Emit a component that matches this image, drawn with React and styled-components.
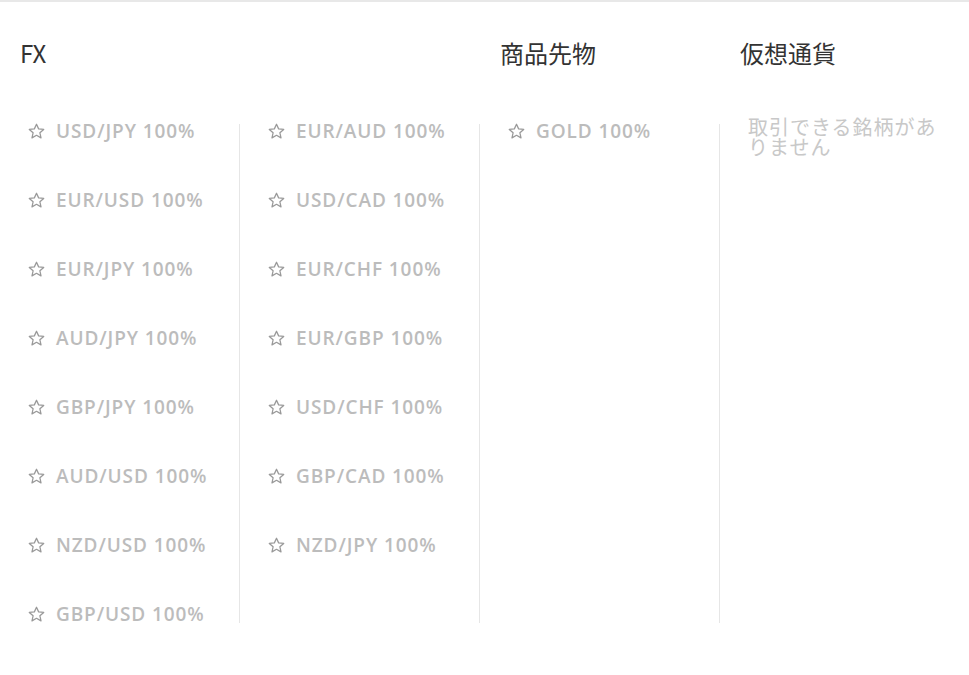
import React from "react";
import styled, { createGlobalStyle } from "styled-components";

const Global = createGlobalStyle`
  html, body { margin: 0; padding: 0; background: #fff; }
  body { font-family: "Open Sans", "Noto Sans CJK JP", sans-serif; }
`;

const Page = styled.div`
  border-top: 2px solid #e8e8e8;
  display: grid;
  grid-template-columns: 480px 240px 240px;
  width: 969px;
  height: 673px;
  box-sizing: border-box;
`;

const Section = styled.section`
  display: flex;
  flex-direction: column;
`;

const Heading = styled.h2`
  margin: 0;
  padding: 36px 0 0 20px;
  height: 82px;
  box-sizing: border-box;
  font-family: "Noto Sans CJK JP", "Open Sans", sans-serif;
  font-weight: 400;
  font-size: 24px;
  line-height: 30px;
  color: #333;
`;

const Columns = styled.div`
  display: grid;
  grid-template-columns: repeat(${(p) => p.$n}, 240px);
`;

const List = styled.ul`
  list-style: none;
  margin: 40px 0 0;
  padding: 0;
  height: 499px;
  border-left: 1px solid ${(p) => (p.$border ? "#e6e6e6" : "transparent")};
  box-sizing: border-box;
  display: flex;
  flex-direction: column;
  gap: 49px;
  margin-left: -1px;
`;

const Item = styled.li`
  display: flex;
  align-items: center;
  height: 20px;
  margin-top: ${(p) => (p.$first ? "-3px" : "0")};
  padding-left: 27px;
  font-family: "Open Sans", sans-serif;
  font-weight: 600;
  font-size: 19px;
  letter-spacing: 0.9px;
  color: #bcbcbc;
  white-space: nowrap;
`;

const Star = styled.svg`
  width: 19px;
  height: 19px;
  margin-right: 10px;
  flex: none;
`;

const Empty = styled.p`
  margin: -7px 0 0;
  padding: 0 20px 0 28px;
  font-family: "Noto Sans CJK JP", sans-serif;
  font-size: 20px;
  line-height: 20px;
  color: #c8c8c8;
  letter-spacing: 1px;
`;

const StarIcon = () => (
  <Star viewBox="0 0 24 24" fill="none" stroke="#999" strokeWidth="1.6" strokeLinejoin="round">
    <path d="M12 2.8l2.7 5.9 6.4.7-4.8 4.3 1.4 6.3L12 16.8 6.3 20l1.4-6.3L2.9 9.4l6.4-.7z" />
  </Star>
);

const fx1 = ["USD/JPY", "EUR/USD", "EUR/JPY", "AUD/JPY", "GBP/JPY", "AUD/USD", "NZD/USD", "GBP/USD"];
const fx2 = ["EUR/AUD", "USD/CAD", "EUR/CHF", "EUR/GBP", "USD/CHF", "GBP/CAD", "NZD/JPY"];

const Pairs = ({ items, border }) => (
  <List $border={border}>
    {items.map((s, i) => (
      <Item key={s} $first={i === 0}>
        <StarIcon />
        {s} 100%
      </Item>
    ))}
  </List>
);

export default function App() {
  return (
    <>
      <Global />
      <Page>
        <Section>
          <Heading>FX</Heading>
          <Columns $n={2}>
            <Pairs items={fx1} />
            <Pairs items={fx2} border />
          </Columns>
        </Section>
        <Section>
          <Heading>商品先物</Heading>
          <Pairs items={["GOLD"]} border />
        </Section>
        <Section>
          <Heading>仮想通貨</Heading>
          <List $border>
            <Empty>取引できる銘柄がありません</Empty>
          </List>
        </Section>
      </Page>
    </>
  );
}
